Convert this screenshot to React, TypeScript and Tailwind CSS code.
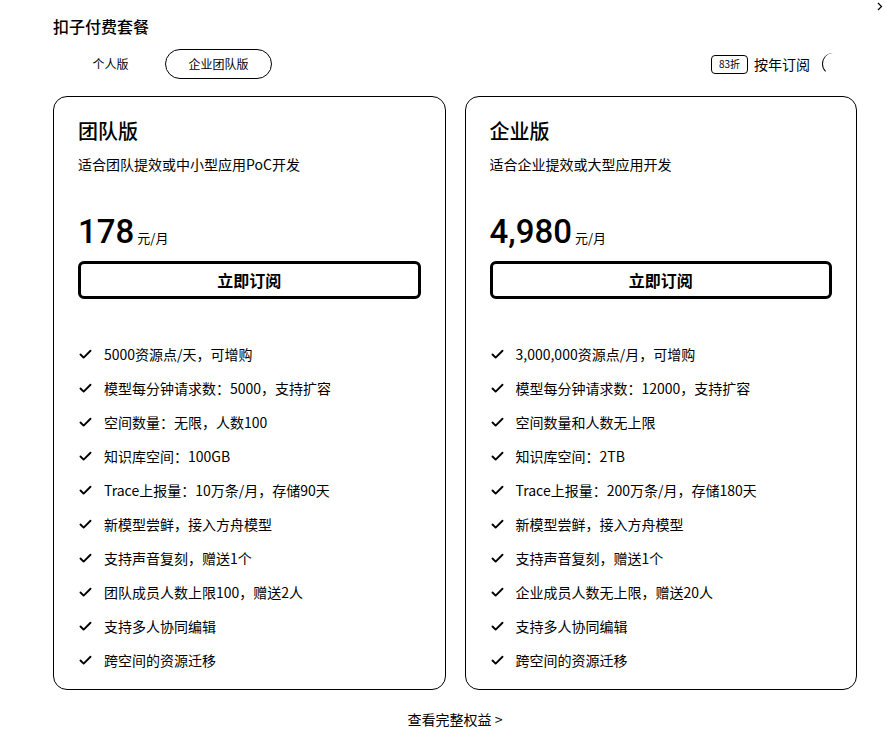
import { Check } from "lucide-react";

const cjk = { fontFamily: '"Noto Sans CJK SC", "Noto Sans", sans-serif' };

const plans = [
  {
    name: "团队版",
    desc: "适合团队提效或中小型应用PoC开发",
    price: "178",
    features: [
      "5000资源点/天，可增购",
      "模型每分钟请求数：5000，支持扩容",
      "空间数量：无限，人数100",
      "知识库空间：100GB",
      "Trace上报量：10万条/月，存储90天",
      "新模型尝鲜，接入方舟模型",
      "支持声音复刻，赠送1个",
      "团队成员人数上限100，赠送2人",
      "支持多人协同编辑",
      "跨空间的资源迁移",
    ],
  },
  {
    name: "企业版",
    desc: "适合企业提效或大型应用开发",
    price: "4,980",
    features: [
      "3,000,000资源点/月，可增购",
      "模型每分钟请求数：12000，支持扩容",
      "空间数量和人数无上限",
      "知识库空间：2TB",
      "Trace上报量：200万条/月，存储180天",
      "新模型尝鲜，接入方舟模型",
      "支持声音复刻，赠送1个",
      "企业成员人数无上限，赠送20人",
      "支持多人协同编辑",
      "跨空间的资源迁移",
    ],
  },
];

const PlanCard = ({ plan }: { plan: (typeof plans)[number] }) => (
  <div className="flex-1 border border-black rounded-[14px] px-[24px] pt-[20px] pb-[12px] bg-white">
    <h2 className="text-[20px] leading-[28px] font-medium text-black">{plan.name}</h2>
    <p className="mt-[9px] text-[14px] leading-[20px] text-black">{plan.desc}</p>
    <div className="mt-[38px] flex items-baseline h-[40px]">
      <span className="text-[33px] leading-[40px] font-medium text-black" style={{ fontFamily: "Roboto, sans-serif" }}>
        {plan.price}
      </span>
      <span className="ml-[3px] text-[13px] text-black">元/月</span>
    </div>
    <button className="mt-[9px] w-full h-[38px] border-[3px] border-black rounded-[6px] bg-white text-[16px] font-bold text-black">
      立即订阅
    </button>
    <ul className="mt-[38px]">
      {plan.features.map((f) => (
        <li key={f} className="h-[34px] flex items-center text-[14px] text-black">
          <Check size={15} strokeWidth={3} className="mr-[11px]" />
          {f}
        </li>
      ))}
    </ul>
  </div>
);

export default function App() {
  return (
    <div className="w-[886px] h-[731px] bg-white overflow-hidden" style={cjk}>
      <div className="h-[12px] flex justify-end pr-[3px] pt-[2px]">
        <svg width="6" height="9" viewBox="0 0 6 9" fill="none" stroke="black" strokeWidth="1.2">
          <path d="M1 1l3.5 3.5L1 8" />
        </svg>
      </div>
      <div className="pl-[53px] w-[857px]">
        <h1 className="mt-[2px] text-[16px] leading-[24px] font-medium text-black">扣子付费套餐</h1>

        <div className="mt-[11px] flex items-center justify-between pr-[13px]">
          <div className="flex items-center pl-[4px] gap-[1px]">
            <div className="w-[107px] h-[30px] flex items-center justify-center text-[12px] text-black">个人版</div>
            <div className="w-[107px] h-[30px] flex items-center justify-center text-[12px] text-black border border-black rounded-full">
              企业团队版
            </div>
          </div>
          <div className="flex items-center">
            <span className="h-[19px] w-[37px] flex items-center justify-center border border-black rounded-[4px] text-[10px] leading-none text-black">
              83折
            </span>
            <span className="ml-[6px] text-[14px] text-black">按年订阅</span>
            <span className="ml-[12px] w-[22px] h-[22px] rounded-full border-l-[1.5px] border-b border-black border-b-transparent" />
          </div>
        </div>

        <div className="mt-[17px] flex gap-[19px] h-[594px]">
          {plans.map((p) => (
            <PlanCard key={p.name} plan={p} />
          ))}
        </div>

        <div className="mt-[19px] text-center text-[14px] leading-[20px] text-black">查看完整权益 &gt;</div>
      </div>
    </div>
  );
}
